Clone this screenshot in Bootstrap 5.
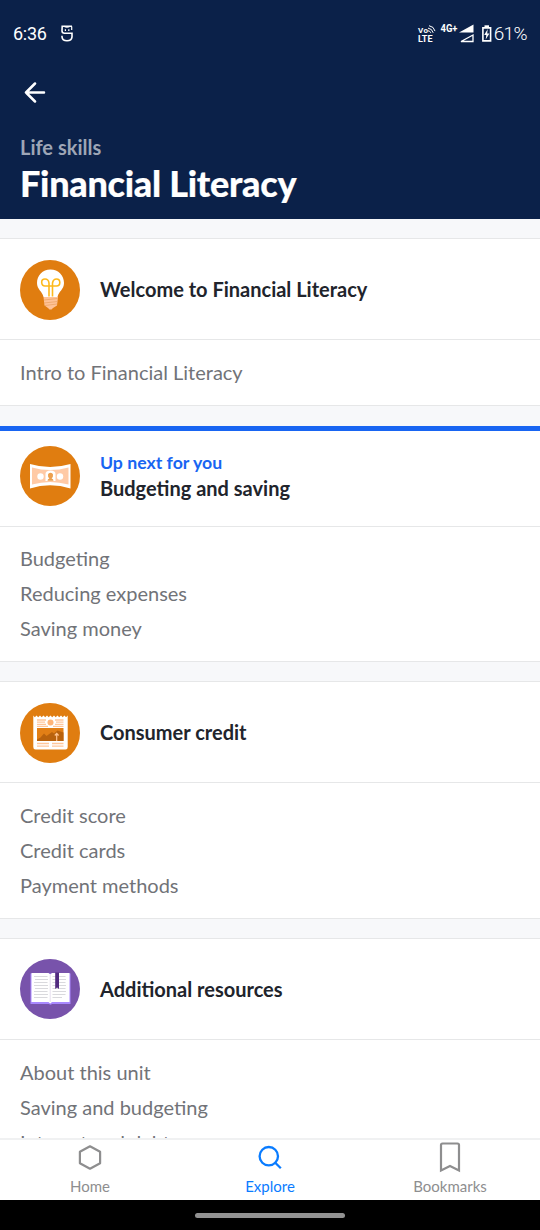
<!DOCTYPE html>
<html lang="en">
<head>
<meta charset="utf-8">
<meta name="viewport" content="width=device-width, initial-scale=1">
<title>Financial Literacy</title>
<link href="https://cdn.jsdelivr.net/npm/bootstrap@5.3.0/dist/css/bootstrap.min.css" rel="stylesheet">
<style>
  body { font-family: Lato, "Liberation Sans", sans-serif; font-size: 20px; line-height: 24px; color: #21242c; background: #fff; }
  .phone { width: 540px; height: 1230px; }
  .app-header { background: #0b2149; height: 219px; }
  .status-bar { height: 68px; padding: 0 13px; font-family: Roboto, sans-serif; font-size: 18px; }
  .clock { letter-spacing: -.3px; font-size: 18px; }
  .ghost-icon { margin: 0 0 2px 14px; }
  .battery-level { letter-spacing: -.6px; font-weight: 300; font-size: 19px; }
  .back-row { height: 48px; padding-left: 24px; }
  .title-block { padding: 19px 20px 0; }
  .eyebrow { color: #9ea6b6; font-size: 20px; font-weight: 700; }
  .page-title { font-size: 36px; font-weight: 900; line-height: 44px; letter-spacing: -.27px; padding-top: 2px; -webkit-text-stroke: .2px #fff; }
  .units { background: #f7f8fa; padding-top: 19px; }
  .unit { background: #fff; border-top: 1px solid #e6e7e8; border-bottom: 1px solid #e6e7e8; margin-bottom: 19px; }
  .unit-first { margin-bottom: 20px; }
  .unit-next { border-top: 5px solid #1865f2; }
  .unit-head { height: 101px; padding: 0 20px; gap: 20px; border-bottom: 1px solid #e6e7e8; font-weight: 700; }
  .unit-next .unit-head { height: 96px; padding: 0 20px 5px; }
  .up-next { color: #1865f2; font-size: 17.7px; line-height: 24px; }
  .unit-name { line-height: 26px; }
  .lessons { padding: 15px 20px; margin: 0; color: #717378; }
  .unit-next .lessons { padding-top: 14px; }
  .lessons li { line-height: 35px; }
  .tabs { height: 62px; border-top: 2px solid #f0f1f2; font-size: 15px; line-height: 18px; color: #8e8e8f; background: #fff; }
  .tabs a { color: inherit; padding-top: 2px; }
  .tabs a.current { color: #0a7cff; }
  .tabs svg { margin-bottom: 3px; }
  .gesture-bar { height: 30px; background: #000; }
  .gesture-pill { width: 150px; height: 5px; background: #919191; }
</style>
</head>
<body>
<div class="phone d-flex flex-column overflow-hidden">
  <header class="app-header text-white flex-shrink-0">
    <div class="status-bar d-flex align-items-center justify-content-between">
      <div class="d-flex align-items-center">
        <span class="clock">6:36</span>
        <svg class="ghost-icon" width="12" height="17" viewBox="0 0 12 17" fill="none" stroke="#fff" stroke-width="1.600">
          <path d="M11 1.200H1.200L1 5.800Q1 8.300 3.500 8.300H11V11.800Q10.600 15.700 6 15.700T1 11.800V10.800"/>
          <path d="M10.700 1.500V5M3 1.200Q6 3.200 9 1.200" stroke-width="1.200"/>
          <path d="M3.800 5.100h1.200M7.200 5.100h1.200"/>
        </svg>
      </div>
      <div class="d-flex align-items-center">
        <svg width="78" height="24" viewBox="0 0 78 24" fill="#fff" font-family="Roboto, sans-serif" font-weight="700">
          <text x="2" y="11" font-size="8" textLength="10">Vo</text>
          <text x="2" y="19.500" font-size="8.800" font-weight="700" textLength="14.500" lengthAdjust="spacingAndGlyphs">LTE</text>
          <path d="M12 6.100q4 .4 5.200 4.700M13 3.700q5 .8 6 5.400M12 8.800q2 0 2.800 2" fill="none" stroke="#fff" stroke-width="1"/>
          <text x="24.500" y="9.800" font-size="10" textLength="17" lengthAdjust="spacingAndGlyphs">4G+</text>
          <path d="M43 10.500L57.500 2.500V10.500Z"/>
          <path d="M45 19.500L57 13V19.500Z" fill="none" stroke="#fff" stroke-width="1.300"/>
          <path d="M66.900 5.900H74.600V18.900H66.900Z" fill="none" stroke="#fff" stroke-width="1.600"/>
          <path d="M68.500 3.300H73V5.500H68.500Z"/>
          <path d="M71.700 7L68.200 13H70.300L69.700 17.500L73.400 11.400H71.200Z"/>
        </svg>
        <span class="battery-level">61%</span>
      </div>
    </div>
    <div class="back-row d-flex align-items-center">
      <svg width="22" height="22" viewBox="0 0 22 22" fill="none" stroke="#fff" stroke-width="2.500" stroke-linecap="round" stroke-linejoin="round"><path d="M20 11.500H2M11 2.500L2 11.500L11 20.500"/></svg>
    </div>
    <div class="title-block">
      <div class="eyebrow">Life skills</div>
      <h1 class="page-title m-0">Financial Literacy</h1>
    </div>
  </header>

  <main class="units flex-grow-1 overflow-hidden">
    <section class="unit unit-first">
      <div class="unit-head d-flex align-items-center">
        <svg width="60" height="61" viewBox="0 -.5 60 61">
          <circle cx="30" cy="30.500" r="30" fill="#e07d10"/>
          <path d="M30.500 10C22.500 10 17 16 17 23.500C17 30 22.500 32 23.500 37.500H37.500C38.500 32 44 30 44 23.500C44 16 38.500 10 30.500 10Z" fill="#fff"/>
          <path d="M23.500 37.500H38L37 46L33 48.500L31.500 50H29.500L28 48.500L24.500 46Z" fill="#ffc296"/>
          <path d="M24 40.500L37.500 39M24 43.500L37.500 42M25 46L37 44.500" stroke="#eaa060" stroke-width=".7"/>
          <path d="M29 37V23.500Q28.500 19.500 25 19.500T21.700 23T25 26.500H36.500Q39.800 26.500 39.800 23T36.500 19.500T32.500 23.500V37" fill="none" stroke="#fdb91c" stroke-width="1.600"/>
        </svg>
        <div class="unit-name">Welcome to Financial Literacy</div>
      </div>
      <ul class="lessons list-unstyled"><li>Intro to Financial Literacy</li></ul>
    </section>

    <section class="unit unit-next">
      <div class="unit-head d-flex align-items-center">
        <svg width="60" height="60" viewBox="0 0 60 60">
          <circle cx="30" cy="30" r="30" fill="#e07d10"/>
          <path d="M10 18Q30 24 50.500 18V42.500Q30 36 10 42.500Z" fill="#fff"/>
          <path d="M12 21.500Q30 26.500 48.500 21.500V38.500Q30 33.500 12 38.500Z" fill="#ffcaa6"/>
          <circle cx="20.500" cy="30.500" r="3.200" fill="#fff"/><circle cx="40" cy="30.500" r="3.200" fill="#fff"/>
          <path d="M25.500 35V28Q25.500 24.500 30.500 24.500T35.500 28V35Z" fill="#fff"/>
          <path d="M27.500 34.800Q27.500 33 29.400 32.500Q27.600 30.500 28 28.500Q28.500 26.800 30.500 26.800T33 28.500Q33.400 30.500 31.600 32.500Q33.500 33 33.500 34.800Z" fill="#eda04e"/>
        </svg>
        <div>
          <div class="up-next">Up next for you</div>
          <div class="unit-name">Budgeting and saving</div>
        </div>
      </div>
      <ul class="lessons list-unstyled"><li>Budgeting</li><li>Reducing expenses</li><li>Saving money</li></ul>
    </section>

    <section class="unit">
      <div class="unit-head d-flex align-items-center">
        <svg width="60" height="61" viewBox="0 -.5 60 61">
          <circle cx="30" cy="30.500" r="30" fill="#e07d10"/>
          <path d="M13.300 13L14.800 14.800L16.500 13L18.200 14.800L20 13L21.700 14.800L23.500 13L25.200 14.800L27 13L28.700 14.800L30.500 13L32.200 14.800L34 13L35.700 14.800L37.500 13L39.200 14.800L41 13L42.700 14.800L44.500 13L46 14.800L47.700 13V44.500Q47.700 47 45.500 47H15.500Q13.300 47 13.300 44.500Z" fill="#fff"/>
          <path d="M17 17.500H26M17 19.700H25M17 21.900H26M35 17.500H43.500M36 19.700H43.500M35 21.900H43.500M17 23.800H28M33 23.800H43.500M17 41H29M32 41H43.500M17 43.700H29M32 43.700H43.500" stroke="#ffc69b" stroke-width="1.300"/>
          <circle cx="30.500" cy="20" r="3" fill="#ffb477"/>
          <path d="M17 25.500H43.500V38.500H17Z" fill="#e27f16"/>
          <path d="M17 37L20.500 35L24 31L26.500 33.500L32 29.500L34 31L37.500 28L43.500 30V38.500H17Z" fill="#b9620d"/>
          <path d="M36.700 38.500V32M34.800 33L36.700 30.800L38.600 33" fill="none" stroke="#ffc38e" stroke-width="1.200"/>
        </svg>
        <div class="unit-name">Consumer credit</div>
      </div>
      <ul class="lessons list-unstyled"><li>Credit score</li><li>Credit cards</li><li>Payment methods</li></ul>
    </section>

    <section class="unit">
      <div class="unit-head d-flex align-items-center">
        <svg width="60" height="60" viewBox="0 0 60 60">
          <circle cx="30" cy="30" r="30" fill="#7853ab"/>
          <path d="M10.500 14.500H50.500V45H32Q30.500 46.500 29 45H10.500Z" fill="#a988ff"/>
          <path d="M11.500 14H28.500L30.200 15.500L32 14H49.500V43H32L30.200 44.500L28.500 43H11.500Z" fill="#fff"/>
          <path d="M30.200 16V43" stroke="#e6e0ef" stroke-width="1"/>
          <path d="M14 17.500H27.500M15 20.500H28M14 23.500H27.500M14 26.500H28M15 29.500H28M14 32.500H27.500M14 35.500H28M14 38.500H27.500M32.500 17.500H45.500M32.500 20.500H46M32.500 23.500H45.500M32.500 26.500H46M32.500 29.500H45.500M32.500 32.500H46M32.500 35.500H45.500M32.500 38.500H42" stroke="#d9d9dd" stroke-width="1.100"/>
          <path d="M35.200 13.500H39V30L37.100 28.500L35.200 30Z" fill="#512b7f"/>
        </svg>
        <div class="unit-name">Additional resources</div>
      </div>
      <ul class="lessons list-unstyled"><li>About this unit</li><li>Saving and budgeting</li><li>Interest and debt</li></ul>
    </section>
  </main>

  <nav class="tabs row g-0 text-center flex-shrink-0">
    <a class="col d-flex flex-column align-items-center text-decoration-none" href="#">
      <svg width="32" height="32" viewBox="0 0 32 32" fill="none" stroke="currentColor" stroke-width="2.200" stroke-linejoin="round"><path d="M16 4.300L26.100 9.800V21.200L16 26.700L5.900 21.200V9.800Z"/></svg>
      Home
    </a>
    <a class="current col d-flex flex-column align-items-center text-decoration-none" href="#" aria-current="page">
      <svg width="32" height="32" viewBox="0 0 32 32" fill="none" stroke="currentColor" stroke-width="2.300"><circle cx="14.800" cy="14.200" r="9.200"/><path d="M20.500 20L26.800 26.200"/></svg>
      Explore
    </a>
    <a class="col d-flex flex-column align-items-center text-decoration-none" href="#">
      <svg width="32" height="32" viewBox="0 0 32 32" fill="none" stroke="currentColor" stroke-width="2.200"><path d="M7 28.500V3Q7 1.500 8.500 1.500H23.500Q25 1.500 25 3V28.500L16 24Z"/></svg>
      Bookmarks
    </a>
  </nav>
  <div class="gesture-bar d-flex align-items-center justify-content-center flex-shrink-0">
    <div class="gesture-pill rounded-pill"></div>
  </div>
</div>
<script src="https://cdn.jsdelivr.net/npm/bootstrap@5.3.0/dist/js/bootstrap.bundle.min.js"></script>
</body>
</html>
